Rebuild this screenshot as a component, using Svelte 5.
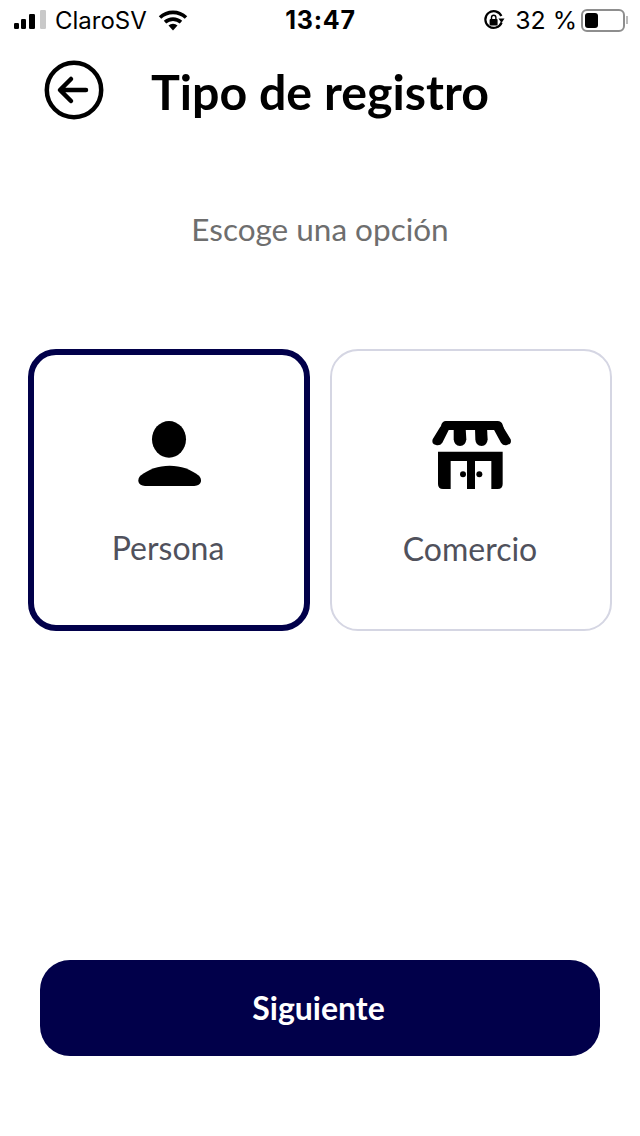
<script>
    let options = [
        { id: 'persona', label: 'Persona' },
        { id: 'comercio', label: 'Comercio' }
    ];
    let selected = 'persona';

    function choose(id) {
        selected = id;
    }
</script>

<div class="screen">
    <div class="status">
        <div class="status__left">
            <svg class="signal" width="34" height="20" viewBox="0 0 34 20">
                <rect x="1" y="13" width="5" height="6" rx="1.2" fill="#000"/>
                <rect x="8" y="9" width="5" height="10" rx="1.2" fill="#000"/>
                <rect x="16" y="4" width="6" height="15" rx="1.2" fill="#000"/>
                <rect x="27" y="0" width="6" height="19" rx="1.2" fill="#c9c9c9"/>
            </svg>
            <span class="carrier">ClaroSV</span>
            <svg class="wifi" width="30" height="22" viewBox="0 0 30 22">
                <path d="M2 8.5a19 19 0 0 1 26 0" fill="none" stroke="#000" stroke-width="3.6"/>
                <path d="M7 13.2a12 12 0 0 1 16 0" fill="none" stroke="#000" stroke-width="3.6"/>
                <path d="M10.5 16.6a6.5 6.5 0 0 1 9 0L15 21.5z" fill="#000"/>
            </svg>
        </div>
        <span class="time">13:47</span>
        <div class="status__right">
            <svg class="lock" width="22" height="22" viewBox="0 0 22 22">
                <path d="M18.6 13.5A8.4 8.4 0 1 1 18.4 7" fill="none" stroke="#000" stroke-width="2.2"/>
                <path d="M15.5 9.5h6L18.5 14z" fill="#000"/>
                <rect x="6.6" y="10" width="8" height="6.4" rx="1" fill="#000"/>
                <path d="M8.5 10V8.4a2.2 2.2 0 0 1 4.4 0V10" fill="none" stroke="#000" stroke-width="1.4"/>
            </svg>
            <span class="percent">32 %</span>
            <div class="battery"><div class="battery__level"></div></div>
            <div class="battery__tip"></div>
        </div>
    </div>

    <header class="header">
        <button class="back" aria-label="Volver">
            <svg width="60" height="60" viewBox="0 0 60 60">
                <circle cx="30" cy="30" r="27.2" fill="none" stroke="#000" stroke-width="4.5"/>
                <path d="M42 30H16.5M27 19 16 30 27 41" fill="none" stroke="#000" stroke-width="4.5" stroke-linecap="round" stroke-linejoin="round"/>
            </svg>
        </button>
        <h1>Tipo de registro</h1>
    </header>

    <p class="hint">Escoge una opción</p>

    <div class="options">
        {#each options as option}
            <button class="card" class:card--active={selected === option.id} on:click={() => choose(option.id)}>
                {#if option.id === 'persona'}
                    <svg class="card__icon" width="100" height="90" viewBox="0 0 300 270">
                        <ellipse cx="150" cy="88" rx="51" ry="55" fill="#000"/>
                        <path d="M78 228C56 228 52 208 66 196 88 178 118 167 152 167s64 11 86 29c14 12 10 32-12 32z" fill="#000"/>
                    </svg>
                {:else}
                    <svg class="card__icon" width="100" height="90" viewBox="2 0 300 270">
                        <!-- awning -->
                        <path d="M76 33H232Q243 33 247 44L252 60H58L63 44Q67 33 76 33Z" fill="#000"/>
                        <path d="M60 50H90L66 98Q59 108 47 105 32 102 37 88Z" fill="#000"/>
                        <path d="M100 55H136L138 88Q136 108 119 108 102 108 100 88Z" fill="#000"/>
                        <path d="M164 55H200L202 88Q200 108 184 108 166 108 165 88Z" fill="#000"/>
                        <path d="M216 50H248L271 88Q275 102 260 105 249 108 242 98Z" fill="#000"/>
                        <!-- shop front -->
                        <path d="M53 125H247V222Q247 237 232 237H213V153H164V237H140V153H91V237H68Q53 237 53 222Z" fill="#000"/>
                        <circle cx="128" cy="193" r="9" fill="#000"/>
                        <circle cx="177" cy="193" r="9" fill="#000"/>
                    </svg>
                {/if}
                <span class="card__label">{option.label}</span>
            </button>
        {/each}
    </div>

    <div class="footer">
        <button class="next">Siguiente</button>
    </div>
</div>

<style>
    :global(body) {
        background: #fff;
    }

    .screen {
        width: 640px;
        height: 1136px;
        display: flex;
        flex-direction: column;
        font-family: Lato, sans-serif;
        overflow: hidden;
    }

    .status {
        height: 40px;
        display: grid;
        grid-template-columns: 1fr auto 1fr;
        align-items: center;
        padding: 0 12px 0 13px;
        font-family: Inter, sans-serif;
        color: #000;
    }

    .status__left,
    .status__right {
        display: flex;
        align-items: center;
    }

    .status__right {
        justify-content: flex-end;
    }

    .carrier {
        font-size: 24px;
        margin-left: 8px;
    }

    .wifi {
        margin-left: 11px;
    }

    .time {
        font-size: 25px;
        font-weight: 700;
        letter-spacing: 0.8px;
    }

    .percent {
        font-size: 24.8px;
        margin-left: 10px;
    }

    .battery {
        width: 44px;
        height: 23px;
        border: 2px solid #8e8e8e;
        border-radius: 6px;
        margin-left: 4px;
        padding: 2px;
        box-sizing: border-box;
    }

    .battery__level {
        width: 13px;
        height: 100%;
        background: #000;
        border-radius: 3px;
    }

    .battery__tip {
        width: 2px;
        height: 8px;
        background: #bbb;
        margin-left: 1px;
    }

    .header {
        display: flex;
        align-items: center;
        padding: 20px 0 0 44px;
    }

    .back {
        width: 60px;
        height: 60px;
        padding: 0;
        border: none;
        background: none;
    }

    .back svg {
        display: block;
    }

    h1 {
        margin: 2px 0 0 47px;
        font-size: 48.3px;
        font-weight: 700;
        line-height: 58px;
        color: #000;
    }

    .hint {
        margin: 89px 0 0;
        text-align: center;
        font-size: 31.5px;
        line-height: 40px;
        color: #6e6e6e;
    }

    .options {
        display: flex;
        gap: 20px;
        padding: 100px 0 0 28px;
    }

    .card {
        width: 282px;
        height: 282px;
        box-sizing: border-box;
        border: 2px solid #d5d6e3;
        border-radius: 28px;
        background: #fff;
        display: flex;
        flex-direction: column;
        align-items: center;
        padding: 59px 0 0;
        font-family: Lato, sans-serif;
    }

    .card--active {
        border: 6px solid #01004a;
        padding-top: 55px;
    }

    .card__icon {
        display: block;
    }

    .card__label {
        margin: 29px 2px 0 0;
        font-size: 32px;
        line-height: 40px;
        color: #50515c;
    }

    .card--active .card__label {
        margin-top: 28px;
    }

    .footer {
        margin-top: auto;
        padding: 0 40px 80px;
    }

    .next {
        width: 100%;
        height: 96px;
        padding: 0 3px 2px 0;
        border: none;
        border-radius: 30px;
        background: #01004a;
        color: #fff;
        font-family: Lato, sans-serif;
        font-size: 32px;
        font-weight: 700;
    }
</style>
